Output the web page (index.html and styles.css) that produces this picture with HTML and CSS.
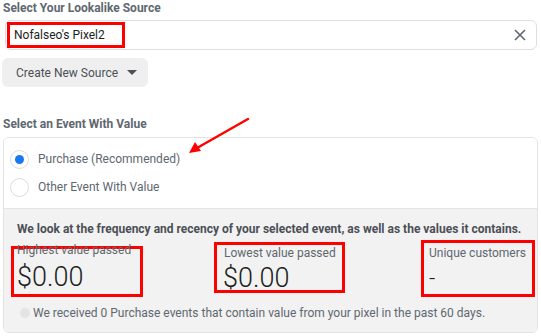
FILE: index.html
```html
<!DOCTYPE html>
<html>
<head>
<meta charset="utf-8">
<link rel="stylesheet" href="styles.css">
</head>
<body>
<div class="page">
  <div class="title">Select Your Lookalike Source</div>
  <div class="input">
    <span class="hl hl-input">Nofalseo's Pixel2</span>
    <svg class="clear" width="12" height="12" viewBox="0 0 12 12"><path d="M1 1 L11 11 M11 1 L1 11" stroke="#606770" stroke-width="1.6" fill="none"/></svg>
  </div>
  <div class="btn">Create New Source <span class="caret"></span></div>

  <div class="title title2">Select an Event With Value</div>
  <div class="box">
    <div class="opts">
      <div class="opt"><span class="radio on"></span>Purchase (Recommended)</div>
      <div class="opt"><span class="radio"></span>Other Event With Value</div>
    </div>
    <div class="grey">
      <div class="desc">We look at the frequency and recency of your selected event, as well as the values it contains.</div>
      <div class="stats">
        <div class="stat hl s1"><div class="lab">Highest value passed</div><div class="val">$0.00</div></div>
        <div class="stat hl s2"><div class="lab">Lowest value passed</div><div class="val">$0.00</div></div>
        <div class="stat hl s3"><div class="lab">Unique customers</div><div class="val dash">-</div></div>
      </div>
      <div class="note"><span class="dot"></span>We received 0 Purchase events that contain value from your pixel in the past 60 days.</div>
    </div>
  </div>
  <svg class="arrow" width="70" height="45" viewBox="0 0 70 45"><path d="M63 4 L12 33" stroke="#f00" stroke-width="2.4" fill="none" stroke-linecap="round"/><path d="M4 38 L10 27 L16 36 Z" fill="#f00"/></svg>
</div>
</body>
</html>
```
FILE: styles.css
```css
* { box-sizing: border-box; }
body { margin: 0; background: #fff; font-family: Roboto, "Liberation Sans", sans-serif; }
.page { position: relative; width: 541px; height: 336px; padding-top: 1px; }
.title { font-size: 12px; font-weight: 700; color: #606770; padding-left: 3px; line-height: 14px; height: 14px; }
.title2 { margin-top: 30px; }
.input { margin: 5px 4px 0 5px; height: 30px; border: 1px solid #dddfe2; border-radius: 6px; display: flex; align-items: center; justify-content: space-between; padding: 0 10px 0 1px; }
.hl { border: 3px solid #f00; }
.hl-input { font-size: 12px; color: #1c1e21; padding: 0 0 0 4px; width: 118px; height: 26px; line-height: 20px; }
.clear { display: block; }
.btn { margin: 8px 0 0 2px; width: 146px; height: 29px; border-radius: 6px; background: #efefef; font-size: 12px; color: #4b4f56; display: flex; align-items: center; padding-left: 14px; }
.caret { width: 0; height: 0; border-left: 5px solid transparent; border-right: 5px solid transparent; border-top: 5px solid #4b4f56; margin-left: 9px; }
.box { margin: 6px 3px 0 3px; height: 196px; border: 1px solid #e1e3e6; border-radius: 6px; overflow: hidden; display: flex; flex-direction: column; }
.opts { padding: 7px 0 7px 6px; background: #fff; }
.opt { display: flex; align-items: center; height: 28px; font-size: 12px; color: #606770; }
.radio { width: 19px; height: 19px; border: 1px solid #dadde1; border-radius: 50%; margin-right: 9px; display: flex; align-items: center; justify-content: center; background: #fff; }
.radio.on::after { content: ""; width: 9px; height: 9px; border-radius: 50%; background: #1877f2; }
.grey { flex: 1; background: #f2f2f2; border-top: 1px solid #e4e4e4; padding: 13px 0 0 6px; }
.desc { font-size: 12px; font-weight: 700; color: #4b4f56; padding-left: 7px; line-height: 14px; }
.stats { display: flex; margin-top: 5px; position: relative; height: 56px; }
.stat { position: absolute; }
.s1 { left: 1px; top: 5px; width: 132px; height: 51px; }
.s2 { left: 204px; top: 1px; width: 131px; height: 51px; }
.s3 { left: 411px; top: -1px; width: 114px; height: 57px; }
.lab { font-size: 12px; color: #606770; line-height: 14px; }
.s1 .lab { margin-top: -6px; padding-left: 3px; }
.s2 .lab { margin-top: 1px; padding-left: 7px; }
.s3 .lab { margin-top: 3px; padding-left: 5px; }
.val { font-size: 27px; font-weight: 300; color: #1c1e21; line-height: 30px; }
.s1 .val { padding-left: 3px; margin-top: 5px; }
.s2 .val { padding-left: 6px; margin-top: 3px; }
.dash { padding-left: 5px; font-size: 22px; margin-top: 4px; }
.note { display: flex; align-items: center; font-size: 12px; color: #606770; margin-top: 9px; padding-left: 10px; }
.dot { width: 10px; height: 10px; border-radius: 50%; background: #e4e4e4; margin-right: 3px; }
.arrow { position: absolute; left: 185px; top: 115px; }
```
